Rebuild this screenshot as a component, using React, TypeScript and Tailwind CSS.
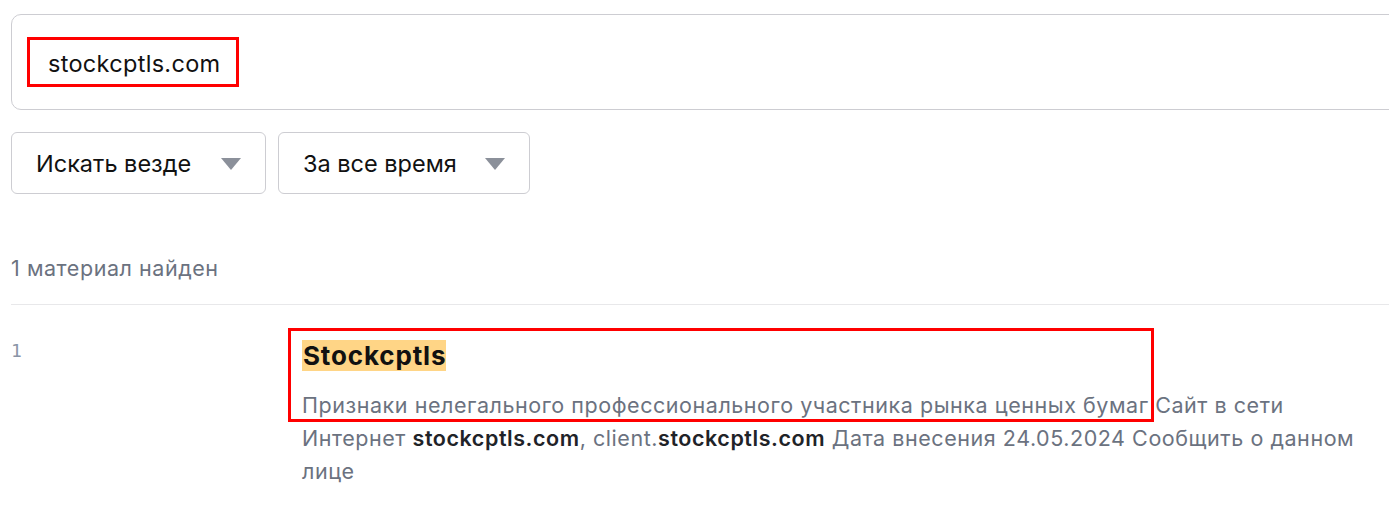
export default function App() {
  return (
    <div className="w-[1389px] h-[509px] overflow-hidden bg-white font-['Inter','Noto_Sans',sans-serif]">
      <div className="w-[1440px] pl-[11px] pt-[14px]">
        {/* Search input */}
        <div className="h-[96px] border border-[#cdcdd2] rounded-[10px] flex items-center pl-[15px]">
          <div className="border-[3px] border-[#ff0000] h-[50px] w-[212px] flex items-center pl-[18px] pt-[3px] text-[23.5px] text-[#111] tracking-[0.3px]">
            stockcptls.com
          </div>
        </div>

        {/* Filters */}
        <div className="flex gap-[12px] mt-[22px]">
          <button className="w-[255px] h-[62px] border border-[#cdcdd2] rounded-[6px] flex items-center justify-between pl-[24px] pr-[24px] pt-[1px] text-[23.5px] text-[#111]">
            <span>Искать везде</span>
            <Caret />
          </button>
          <button className="w-[252px] h-[62px] border border-[#cdcdd2] rounded-[6px] flex items-center justify-between pl-[24px] pr-[24px] pt-[1px] text-[23.5px] text-[#111]">
            <span>За все время</span>
            <Caret />
          </button>
        </div>

        {/* Count */}
        <div className="mt-[62px] text-[21.5px] tracking-[0.55px] text-[#6b7280] leading-[24px]">1 материал найден</div>
        <div className="mt-[24px] h-px bg-[#e8e8ea] w-[1420px]" />

        {/* Result */}
        <div className="flex pt-[34px]">
          <div className="w-[291px] pt-[2px] font-['DejaVu_Sans_Mono',monospace] text-[18px] text-[#8a94a6] leading-[20px]">1</div>
          <div className="relative w-[1062px]">
            <div className="absolute left-[-14px] top-[-11px] w-[866px] h-[94px] border-[3px] border-[#ff0000] pointer-events-none" />
            <h3 className="text-[26px] tracking-[0.85px] font-bold leading-[33px] text-[#111]">
              <span className="bg-[#ffd586] pl-[1px]">Stockcptls</span>
            </h3>
            <p className="mt-[17px] text-[21.5px] tracking-[0.55px] leading-[33px] text-[#6b7280]">
              Признаки нелегального профессионального участника рынка ценных бумаг Сайт в сети Интернет{' '}
              <b className="text-[#1f2328] font-semibold">stockcptls.com</b>, client.
              <b className="text-[#1f2328] font-semibold">stockcptls.com</b> Дата внесения 24.05.2024 Сообщить о данном лице
            </p>
          </div>
        </div>
      </div>
    </div>
  );
}

function Caret() {
  return (
    <svg width="20" height="12" viewBox="0 0 20 12">
      <path d="M0 0 H20 L10 12 Z" fill="#8b909a" />
    </svg>
  );
}
